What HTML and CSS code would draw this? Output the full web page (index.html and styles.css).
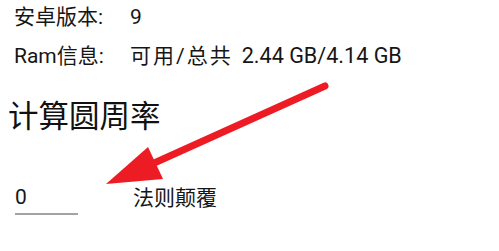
FILE: index.html
```html
<!DOCTYPE html>
<html lang="zh-CN">
<head>
<meta charset="utf-8">
<title>计算圆周率</title>
<link rel="stylesheet" href="styles.css">
</head>
<body>
<div class="screen">
  <div class="info">
    <div class="row">
      <span class="label">安卓版本:</span>
      <span class="value">9</span>
    </div>
    <div class="row">
      <span class="label">Ram信息:</span>
      <span class="value"><span class="avail">可用/总共</span><span class="mem">2.44 GB/4.14 GB</span></span>
    </div>
  </div>
  <h1 class="title">计算圆周率</h1>
  <div class="calc">
    <div class="field">0</div>
    <div class="action">法则颠覆</div>
  </div>
  <svg class="arrow" width="499" height="251" viewBox="0 0 499 251" aria-hidden="true">
    <line x1="325" y1="86" x2="152" y2="164" stroke="#ED1C24" stroke-width="7" stroke-linecap="round"/>
    <polygon points="106,184 148,147 163,179" fill="#ED1C24"/>
  </svg>
</div>
</body>
</html>
```
FILE: styles.css
```css
html, body {
  margin: 0;
  padding: 0;
  background: #ffffff;
}

.screen {
  position: relative;
  width: 499px;
  height: 251px;
  overflow: hidden;
  font-family: "Roboto", "Noto Sans CJK SC", sans-serif;
  color: #161616;
}

.info {
  display: flex;
  flex-direction: column;
  gap: 13px;
  padding: 4px 0 0 14px;
}

.row {
  display: flex;
  height: 26px;
  line-height: 26px;
  font-size: 21px;
}

.label {
  width: 116px;
  flex: none;
}

.value {
  display: flex;
}

.avail {
  letter-spacing: 2px;
}

.mem {
  margin-left: 9px;
  font-size: 21.6px;
}

.title {
  margin: 30px 0 0 8px;
  font-size: 30.5px;
  line-height: 36px;
  font-weight: normal;
  color: #111111;
}

.calc {
  display: flex;
  align-items: flex-start;
  margin-top: 49px;
  padding-left: 15px;
}

.field {
  width: 63px;
  font-size: 21px;
  line-height: 26px;
  padding-bottom: 3px;
  border-bottom: 2px solid #a3a3a3;
}

.action {
  margin-left: 55px;
  margin-top: 1px;
  font-size: 21px;
  line-height: 26px;
}

.arrow {
  position: absolute;
  left: 0;
  top: 0;
}
```
